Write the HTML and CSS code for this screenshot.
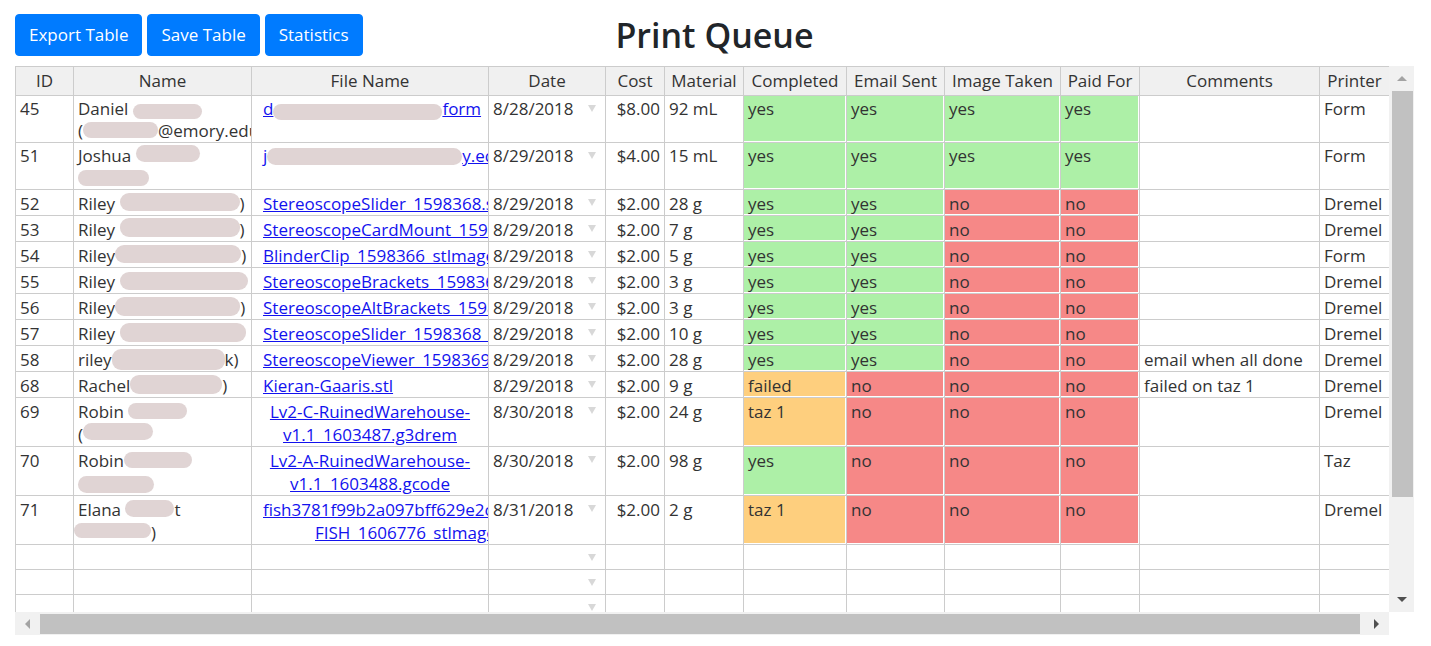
FILE: index.html
```
<!DOCTYPE html>
<html lang="en">
<head>
<meta charset="utf-8">
<title>Print Queue</title>
<link rel="stylesheet" href="styles.css">
</head>
<body>
<div class="page">
  <div class="topbar">
    <div class="actions">
      <button class="btn">Export Table</button>
      <button class="btn">Save Table</button>
      <button class="btn">Statistics</button>
    </div>
    <h1 class="title">Print Queue</h1>
    <div></div>
  </div>

  <div class="sheet">
    <div class="viewport">
      <table class="grid">
        <colgroup>
          <col class="c-id"><col class="c-name"><col class="c-file"><col class="c-date"><col class="c-cost"><col class="c-mat"><col class="c-comp"><col class="c-email"><col class="c-img"><col class="c-paid"><col class="c-comm"><col class="c-prn">
        </colgroup>
        <thead>
          <tr><th>ID</th><th>Name</th><th>File Name</th><th>Date</th><th>Cost</th><th>Material</th><th>Completed</th><th>Email Sent</th><th>Image Taken</th><th>Paid For</th><th>Comments</th><th>Printer</th></tr>
        </thead>
        <tbody>
          <tr class="r2a">
            <td>45</td>
            <td>Daniel <span class="bl b45a"></span><br>(<span class="bl b45b"></span>@emory.edu</td>
            <td class="file"><a href="#">d<span class="bl f45"></span>form</a></td>
            <td><div class="dd"><span>8/28/2018</span><span class="arrow"></span></div></td>
            <td class="num">$8.00</td><td>92 mL</td>
            <td class="ok">yes</td><td class="ok">yes</td><td class="ok">yes</td><td class="ok">yes</td>
            <td></td><td>Form</td>
          </tr>
          <tr class="r2a">
            <td>51</td>
            <td>Joshua <span class="bl b51a"></span><br><span class="bl b51b"></span></td>
            <td class="file"><a href="#">j<span class="bl f51"></span>y.edu</a></td>
            <td><div class="dd"><span>8/29/2018</span><span class="arrow"></span></div></td>
            <td class="num">$4.00</td><td>15 mL</td>
            <td class="ok">yes</td><td class="ok">yes</td><td class="ok">yes</td><td class="ok">yes</td>
            <td></td><td>Form</td>
          </tr>
          <tr>
            <td>52</td>
            <td>Riley <span class="bl b52"></span>)</td>
            <td class="file"><a href="#">StereoscopeSlider_1598368.stl</a></td>
            <td><div class="dd"><span>8/29/2018</span><span class="arrow"></span></div></td>
            <td class="num">$2.00</td><td>28 g</td>
            <td class="ok">yes</td><td class="ok">yes</td><td class="bad">no</td><td class="bad">no</td>
            <td></td><td>Dremel</td>
          </tr>
          <tr>
            <td>53</td>
            <td>Riley <span class="bl b53"></span>)</td>
            <td class="file"><a href="#">StereoscopeCardMount_1598367.stl</a></td>
            <td><div class="dd"><span>8/29/2018</span><span class="arrow"></span></div></td>
            <td class="num">$2.00</td><td>7 g</td>
            <td class="ok">yes</td><td class="ok">yes</td><td class="bad">no</td><td class="bad">no</td>
            <td></td><td>Dremel</td>
          </tr>
          <tr>
            <td>54</td>
            <td>Riley<span class="bl b54"></span>)</td>
            <td class="file"><a href="#">BlinderClip_1598366_stlmage.gcode</a></td>
            <td><div class="dd"><span>8/29/2018</span><span class="arrow"></span></div></td>
            <td class="num">$2.00</td><td>5 g</td>
            <td class="ok">yes</td><td class="ok">yes</td><td class="bad">no</td><td class="bad">no</td>
            <td></td><td>Form</td>
          </tr>
          <tr>
            <td>55</td>
            <td>Riley <span class="bl b55"></span></td>
            <td class="file"><a href="#">StereoscopeBrackets_1598365.stl</a></td>
            <td><div class="dd"><span>8/29/2018</span><span class="arrow"></span></div></td>
            <td class="num">$2.00</td><td>3 g</td>
            <td class="ok">yes</td><td class="ok">yes</td><td class="bad">no</td><td class="bad">no</td>
            <td></td><td>Dremel</td>
          </tr>
          <tr>
            <td>56</td>
            <td>Riley<span class="bl b56"></span>)</td>
            <td class="file"><a href="#">StereoscopeAltBrackets_1598364.stl</a></td>
            <td><div class="dd"><span>8/29/2018</span><span class="arrow"></span></div></td>
            <td class="num">$2.00</td><td>3 g</td>
            <td class="ok">yes</td><td class="ok">yes</td><td class="bad">no</td><td class="bad">no</td>
            <td></td><td>Dremel</td>
          </tr>
          <tr>
            <td>57</td>
            <td>Riley <span class="bl b57"></span></td>
            <td class="file"><a href="#">StereoscopeSlider_1598368_stlmage.gcode</a></td>
            <td><div class="dd"><span>8/29/2018</span><span class="arrow"></span></div></td>
            <td class="num">$2.00</td><td>10 g</td>
            <td class="ok">yes</td><td class="ok">yes</td><td class="bad">no</td><td class="bad">no</td>
            <td></td><td>Dremel</td>
          </tr>
          <tr>
            <td>58</td>
            <td>riley<span class="bl b58"></span>k)</td>
            <td class="file"><a href="#">StereoscopeViewer_1598369.stl</a></td>
            <td><div class="dd"><span>8/29/2018</span><span class="arrow"></span></div></td>
            <td class="num">$2.00</td><td>28 g</td>
            <td class="ok">yes</td><td class="ok">yes</td><td class="bad">no</td><td class="bad">no</td>
            <td>email when all done</td><td>Dremel</td>
          </tr>
          <tr>
            <td>68</td>
            <td>Rachel<span class="bl b68"></span>)</td>
            <td class="file"><a href="#">Kieran-Gaaris.stl</a></td>
            <td><div class="dd"><span>8/29/2018</span><span class="arrow"></span></div></td>
            <td class="num">$2.00</td><td>9 g</td>
            <td class="warn">failed</td><td class="bad">no</td><td class="bad">no</td><td class="bad">no</td>
            <td>failed on taz 1</td><td>Dremel</td>
          </tr>
          <tr class="r2b">
            <td>69</td>
            <td>Robin <span class="bl b69a"></span><br>(<span class="bl b69b"></span></td>
            <td class="file center"><a href="#">Lv2-C-RuinedWarehouse-<br>v1.1_1603487.g3drem</a></td>
            <td><div class="dd"><span>8/30/2018</span><span class="arrow"></span></div></td>
            <td class="num">$2.00</td><td>24 g</td>
            <td class="warn">taz 1</td><td class="bad">no</td><td class="bad">no</td><td class="bad">no</td>
            <td></td><td>Dremel</td>
          </tr>
          <tr class="r2b">
            <td>70</td>
            <td>Robin<span class="bl b70a"></span><br><span class="bl b70b"></span></td>
            <td class="file center"><a href="#">Lv2-A-RuinedWarehouse-<br>v1.1_1603488.gcode</a></td>
            <td><div class="dd"><span>8/30/2018</span><span class="arrow"></span></div></td>
            <td class="num">$2.00</td><td>98 g</td>
            <td class="ok">yes</td><td class="bad">no</td><td class="bad">no</td><td class="bad">no</td>
            <td></td><td>Taz</td>
          </tr>
          <tr class="r2b">
            <td>71</td>
            <td>Elana <span class="bl b71a"></span>t<br><span class="bl b71b"></span>)</td>
            <td class="file"><a href="#" class="two">fish3781f99b2a097bff629e2c41b07a_-_<span class="l2">FISH_1606776_stlmage.gcode</span></a></td>
            <td><div class="dd"><span>8/31/2018</span><span class="arrow"></span></div></td>
            <td class="num">$2.00</td><td>2 g</td>
            <td class="warn">taz 1</td><td class="bad">no</td><td class="bad">no</td><td class="bad">no</td>
            <td></td><td>Dremel</td>
          </tr>
          <tr class="empty">
            <td></td><td></td><td></td><td><div class="dd end"><span class="arrow"></span></div></td><td></td><td></td><td></td><td></td><td></td><td></td><td></td><td></td>
          </tr>
          <tr class="empty">
            <td></td><td></td><td></td><td><div class="dd end"><span class="arrow"></span></div></td><td></td><td></td><td></td><td></td><td></td><td></td><td></td><td></td>
          </tr>
          <tr class="empty">
            <td></td><td></td><td></td><td><div class="dd end"><span class="arrow"></span></div></td><td></td><td></td><td></td><td></td><td></td><td></td><td></td><td></td>
          </tr>
        </tbody>
      </table>
    </div>

    <div class="vbar">
      <div class="sbtn"><span class="tri up"></span></div>
      <div class="vthumb"></div>
      <div class="fill"></div>
      <div class="sbtn"><span class="tri down"></span></div>
    </div>

    <div class="hbar">
      <div class="sbtn"><span class="tri left"></span></div>
      <div class="hthumb"></div>
      <div class="fill"></div>
      <div class="sbtn"><span class="tri right"></span></div>
    </div>
    <div class="corner"></div>
  </div>
</div>
</body>
</html>
```
FILE: styles.css
```
* { box-sizing: border-box; }

body {
  margin: 0;
  font-family: "Open Sans", "Noto Sans", sans-serif;
  color: #333;
  background: #fff;
}

.page {
  padding: 14px 17px 0 15px;
}

.topbar {
  display: grid;
  grid-template-columns: 1fr auto 1fr;
  align-items: start;
  height: 42px;
}

.actions {
  display: flex;
  gap: 5px;
}

.btn {
  font-family: inherit;
  font-size: 17px;
  line-height: 26px;
  color: #fff;
  background: #007bff;
  border: 1px solid #007bff;
  border-radius: 4px;
  padding: 7px 13px;
  cursor: pointer;
}

.title {
  margin: 0;
  font-size: 34px;
  font-weight: 600;
  line-height: 42px;
  color: #212529;
}

.sheet {
  margin-top: 10px;
  display: grid;
  grid-template-columns: 1374px 25px;
  grid-template-rows: 546px 23px;
}

.viewport {
  overflow: hidden;
}

.grid {
  border-collapse: separate;
  border-spacing: 0;
  table-layout: fixed;
  width: 1375px;
  border-top: 1px solid #ccc;
  border-left: 1px solid #ccc;
  font-size: 17px;
  line-height: 23px;
  color: #333;
}

.c-id { width: 58px; }
.c-name { width: 178px; }
.c-file { width: 237px; }
.c-date { width: 117px; }
.c-cost { width: 59px; }
.c-mat { width: 79px; }
.c-comp { width: 103px; }
.c-email { width: 98px; }
.c-img { width: 116px; }
.c-paid { width: 79px; }
.c-comm { width: 180px; }
.c-prn { width: 70px; }

.grid th {
  height: 29px;
  padding: 0 4px;
  background: #f0f0f0;
  font-weight: 400;
  text-align: center;
  line-height: 28px;
  border-right: 1px solid #ccc;
  border-bottom: 1px solid #ccc;
  white-space: nowrap;
  overflow: hidden;
}

.grid td {
  height: 26px;
  padding: 2px 4px 0;
  vertical-align: top;
  border-right: 1px solid #ccc;
  border-bottom: 1px solid #ccc;
  white-space: nowrap;
  overflow: hidden;
}

.grid tr.r2a td { height: 47px; line-height: 22px; }
.grid tr.r2b td { height: 49px; }
.grid tr.empty td { height: 25px; }

.grid td.num { text-align: right; }

.grid td.ok { background: #adf0a7; box-shadow: inset -1px -1px 0 #fff; }
.grid td.bad { background: #f68887; box-shadow: inset -1px -1px 0 #fff; }
.grid td.warn { background: #fecf7e; box-shadow: inset -1px -1px 0 #fff; }

.grid td.file { padding-left: 11px; }
.grid td.file.center { padding-left: 4px; text-align: center; }

.grid a { color: #1212ee; text-decoration: underline; }
.grid a.two .l2 { display: block; padding-left: 52px; }

.dd {
  display: flex;
  justify-content: space-between;
  align-items: flex-start;
}
.dd.end { justify-content: flex-end; }

.arrow {
  width: 0;
  height: 0;
  border-left: 4px solid transparent;
  border-right: 4px solid transparent;
  border-top: 7px solid #d8d8d8;
  margin-top: 7px;
  margin-right: 5px;
}

/* redaction blobs */
.bl {
  display: inline-block;
  background: #e0d4d4;
  border-radius: 9px;
  height: 18px;
  vertical-align: -1px;
}
.b45a { width: 69px; height: 15px; vertical-align: -4px; }
.b45b { width: 75px; height: 16px; vertical-align: -1px; }
.f45 { width: 169px; height: 16px; vertical-align: -5px; }
.b51a { width: 64px; height: 17px; vertical-align: 0; }
.b51b { width: 71px; height: 16px; vertical-align: -2px; }
.f51 { width: 195px; height: 17px; vertical-align: -3px; }
.b52 { width: 120px; height: 18px; vertical-align: -1px; }
.b53 { width: 120px; height: 19px; vertical-align: -1px; }
.b54 { width: 126px; height: 18px; vertical-align: -1px; }
.b55 { width: 128px; height: 18px; vertical-align: -2px; }
.b56 { width: 125px; height: 19px; vertical-align: -2px; }
.b57 { width: 126px; height: 19px; vertical-align: -2px; }
.b58 { width: 113px; height: 21px; vertical-align: -4px; }
.b68 { width: 92px; height: 19px; vertical-align: -2px; }
.b69a { width: 59px; height: 16px; vertical-align: -1px; }
.b69b { width: 70px; height: 17px; vertical-align: 1px; }
.b70a { width: 68px; height: 16px; vertical-align: -1px; }
.b70b { width: 76px; height: 17px; vertical-align: -3px; }
.b71a { width: 49px; height: 17px; vertical-align: -1px; }
.b71b { width: 77px; height: 15px; vertical-align: 1px; margin-left: -4px; }

/* scrollbars */
.vbar {
  display: flex;
  flex-direction: column;
  background: #f1f1f1;
}
.hbar {
  display: flex;
  background: #f1f1f1;
}
.corner { background: #fff; }

.sbtn {
  flex: 0 0 25px;
  display: flex;
  align-items: center;
  justify-content: center;
}
.fill { flex: 1; }

.vthumb {
  height: 406px;
  margin: 0 1px 0 3px;
  background: #c1c1c1;
}
.hthumb {
  width: 1320px;
  margin: 2px 0 1px;
  background: #c1c1c1;
}

.tri { width: 0; height: 0; }
.tri.up {
  border-left: 5px solid transparent;
  border-right: 5px solid transparent;
  border-bottom: 5px solid #a3a3a3;
}
.tri.down {
  border-left: 5px solid transparent;
  border-right: 5px solid transparent;
  border-top: 5px solid #505050;
}
.tri.left {
  border-top: 5px solid transparent;
  border-bottom: 5px solid transparent;
  border-right: 5px solid #a3a3a3;
}
.tri.right {
  border-top: 5px solid transparent;
  border-bottom: 5px solid transparent;
  border-left: 5px solid #505050;
}
```
